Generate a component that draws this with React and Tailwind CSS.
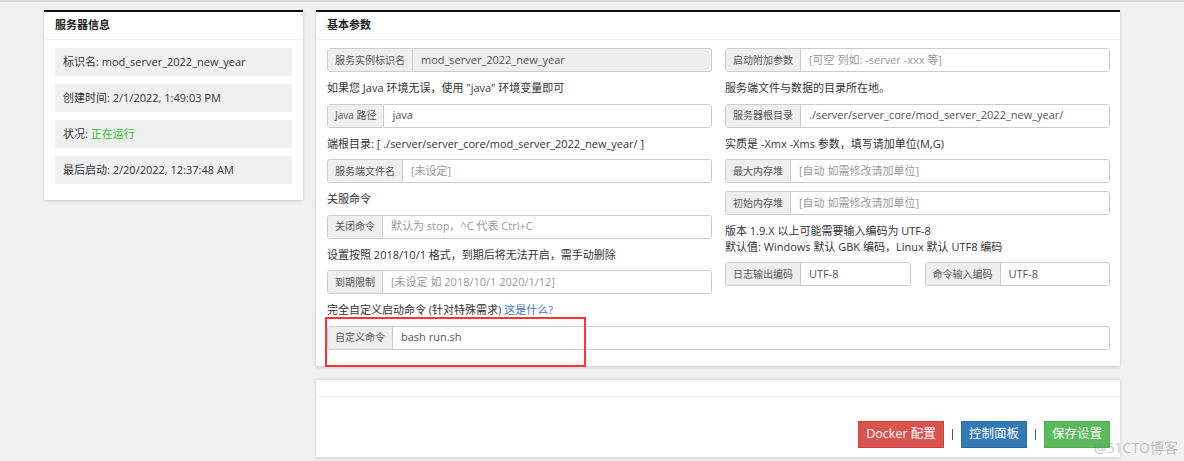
const font = { fontFamily: '"Open Sans", "Noto Sans CJK SC", sans-serif' }

function Field({ label, value, placeholder, disabled }) {
  return (
    <div className="flex h-[24px] border border-[#ccc] rounded-[3px] overflow-hidden">
      <span className="flex items-center px-[7px] bg-[#eee] border-r border-[#ccc] text-[10px] text-[#555] whitespace-nowrap">
        {label}
      </span>
      <span
        className={
          'flex-1 flex items-center px-[8px] text-[11px] whitespace-nowrap ' +
          (disabled ? 'bg-[#eee] ' : 'bg-white ') +
          (value ? 'text-[#555]' : 'text-[#999]')
        }
      >
        {value || placeholder}
      </span>
    </div>
  )
}

function Note({ children }) {
  return <div className="h-[15.5px] leading-[15.5px] text-[11px] text-[#333] whitespace-nowrap">{children}</div>
}

function CardHeader({ title, className = '' }) {
  return (
    <div className={'flex items-center px-[11px] border-b border-[#f2f2f2] text-[11px] font-bold text-[#222] ' + className}>
      {title}
    </div>
  )
}

const info = [
  { k: '标识名', v: 'mod_server_2022_new_year' },
  { k: '创建时间', v: '2/1/2022, 1:49:03 PM' },
  { k: '状况', v: '正在运行', green: true },
  { k: '最后启动', v: '2/20/2022, 12:37:48 AM' },
]

export default function App() {
  return (
    <div className="relative w-[1184px] h-[461px] bg-[#f1f1f1] overflow-hidden" style={font}>
      <div className="h-[2px] bg-[#d9d9d9]" />
      <div className="flex items-start gap-[13px] pl-[44px] pt-[8px]">
        {/* server info */}
        <div className="w-[259px] bg-white border-t-2 border-[#111] shadow-[0_1px_3px_rgba(0,0,0,0.18)] pb-[16px]">
          <CardHeader title="服务器信息" className="h-[28px]" />
          <div className="flex flex-col gap-[8px] px-[11px] pt-[8px]">
            {info.map((it) => (
              <div key={it.k} className="h-[28px] flex items-center px-[8px] bg-[#f0f0f0] text-[11px] text-[#333]">
                {it.k}:&nbsp;
                <span className={it.green ? 'text-[#2fbf2f]' : ''}>{it.v}</span>
              </div>
            ))}
          </div>
        </div>

        <div className="w-[804px] flex flex-col gap-[13px]">
          {/* basic params */}
          <div className="relative bg-white border-t-2 border-[#111] shadow-[0_1px_3px_rgba(0,0,0,0.18)]">
            <CardHeader title="基本参数" className="h-[28px]" />
            <div className="pl-[11px] pr-[10px] pt-[8px] pb-[16px]">
              <div className="grid grid-cols-2 gap-x-[13px] items-start">
                <div className="flex flex-col gap-[8px]">
                  <Field label="服务实例标识名" value="mod_server_2022_new_year" disabled />
                  <Note>如果您 Java 环境无误，使用 "java" 环境变量即可</Note>
                  <Field label="Java 路径" value="java" />
                  <Note>端根目录: [ ./server/server_core/mod_server_2022_new_year/ ]</Note>
                  <Field label="服务端文件名" placeholder="[未设定]" />
                  <Note>关服命令</Note>
                  <Field label="关闭命令" placeholder="默认为 stop，^C 代表 Ctrl+C" />
                  <Note>设置按照 2018/10/1 格式，到期后将无法开启，需手动删除</Note>
                  <Field label="到期限制" placeholder="[未设定 如 2018/10/1 2020/1/12]" />
                  <Note>
                    完全自定义启动命令 (针对特殊需求) <span className="text-[#337ab7]">这是什么?</span>
                  </Note>
                </div>
                <div className="flex flex-col gap-[8px]">
                  <Field label="启动附加参数" placeholder="[可空 列如: -server -xxx 等]" />
                  <Note>服务端文件与数据的目录所在地。</Note>
                  <Field label="服务器根目录" value="./server/server_core/mod_server_2022_new_year/" />
                  <Note>实质是 -Xmx -Xms 参数，填写请加单位(M,G)</Note>
                  <Field label="最大内存堆" placeholder="[自动 如需修改请加单位]" />
                  <Field label="初始内存堆" placeholder="[自动 如需修改请加单位]" />
                  <div>
                    <Note>版本 1.9.X 以上可能需要输入编码为 UTF-8</Note>
                    <Note>默认值: Windows 默认 GBK 编码，Linux 默认 UTF8 编码</Note>
                  </div>
                  <div className="grid grid-cols-2 gap-[14px]">
                    <Field label="日志输出编码" value="UTF-8" />
                    <Field label="命令输入编码" value="UTF-8" />
                  </div>
                </div>
              </div>
              <div className="mt-[8px]">
                <Field label="自定义命令" value="bash run.sh" />
              </div>
            </div>
            <div className="absolute left-[9px] top-[305px] w-[261px] h-[50px] border-2 border-[#f33]" />
          </div>

          {/* actions */}
          <div className="bg-white border-t border-[#ddd] shadow-[0_1px_3px_rgba(0,0,0,0.18)] h-[78px]">
            <div className="h-[17px] border-b border-[#f2f2f2]" />
            <div className="flex justify-end items-center gap-[8px] pr-[10px] pt-[24px]">
              <button className="h-[27px] w-[86px] bg-[#d9534f] border border-[#d43f3a] text-white text-[12.5px]">Docker 配置</button>
              <div className="w-[1px] h-[11px] bg-[#556]" />
              <button className="h-[27px] w-[66px] bg-[#337ab7] border border-[#2e6da4] text-white text-[12.5px]">控制面板</button>
              <div className="w-[1px] h-[11px] bg-[#556]" />
              <button className="h-[27px] w-[66px] bg-[#5cb85c] border border-[#4cae4c] text-white text-[12.5px]">保存设置</button>
            </div>
          </div>
        </div>
      </div>
      <div className="absolute left-[1094px] top-[437px] text-[14px] text-[rgba(120,120,120,0.45)]">@51CTO博客</div>
    </div>
  )
}
